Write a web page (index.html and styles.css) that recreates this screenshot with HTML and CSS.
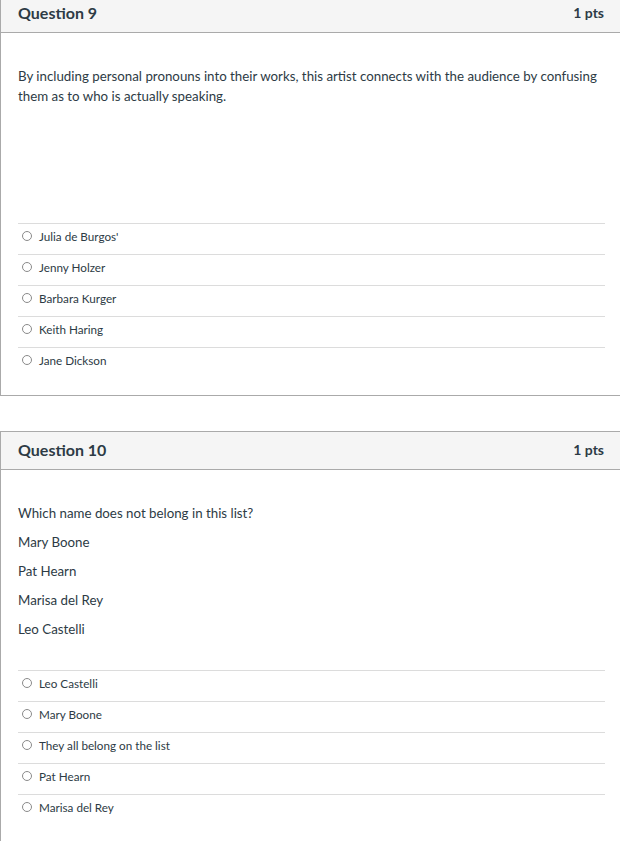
FILE: index.html
```html
<!DOCTYPE html>
<html lang="en">
<head>
<meta charset="utf-8">
<title>Quiz</title>
<link rel="stylesheet" href="styles.css">
</head>
<body>
<div class="page">
  <section class="question first">
    <header class="qhead">
      <h2 class="qtitle">Question 9</h2>
      <span class="qpts">1 pts</span>
    </header>
    <div class="qbody">
      <div class="qtext">
        <p>By including personal pronouns into their works, this artist connects with the audience by confusing them as to who is actually speaking.</p>
      </div>
      <div class="answers">
        <label class="answer"><span class="radio"></span><span class="alabel">Julia de Burgos'</span></label>
        <label class="answer"><span class="radio"></span><span class="alabel">Jenny Holzer</span></label>
        <label class="answer"><span class="radio"></span><span class="alabel">Barbara Kurger</span></label>
        <label class="answer"><span class="radio"></span><span class="alabel">Keith Haring</span></label>
        <label class="answer"><span class="radio"></span><span class="alabel">Jane Dickson</span></label>
      </div>
    </div>
  </section>
  <section class="question">
    <header class="qhead">
      <h2 class="qtitle">Question 10</h2>
      <span class="qpts">1 pts</span>
    </header>
    <div class="qbody">
      <div class="qtext">
        <p>Which name does not belong in this list?</p>
        <p>Mary Boone</p>
        <p>Pat Hearn</p>
        <p>Marisa del Rey</p>
        <p>Leo Castelli</p>
      </div>
      <div class="answers">
        <label class="answer"><span class="radio"></span><span class="alabel">Leo Castelli</span></label>
        <label class="answer"><span class="radio"></span><span class="alabel">Mary Boone</span></label>
        <label class="answer"><span class="radio"></span><span class="alabel">They all belong on the list</span></label>
        <label class="answer"><span class="radio"></span><span class="alabel">Pat Hearn</span></label>
        <label class="answer"><span class="radio"></span><span class="alabel">Marisa del Rey</span></label>
      </div>
    </div>
  </section>
</div>
</body>
</html>
```

FILE: styles.css
```css
html, body {
  margin: 0;
  padding: 0;
  background: #ffffff;
  overflow: hidden;
}

body {
  font-family: Lato, "Open Sans", Arial, sans-serif;
  color: #2d3b45;
}

.page {
  width: 622px;
}

.question {
  border: 1px solid #aaaaaa;
  background: #ffffff;
  margin-bottom: 35px;
}

.question.first {
  margin-top: -6px;
}

.qhead {
  box-sizing: content-box;
  display: flex;
  align-items: center;
  justify-content: space-between;
  height: 35px;
  padding: 0 17px 2px 17px;
  background: #f5f5f5;
  border-bottom: 1px solid #aaaaaa;
}

.qtitle {
  margin: 0;
  font-size: 16px;
  font-weight: 700;
  color: #2d3b45;
}

.qpts {
  font-size: 14px;
  font-weight: 700;
  color: #2d3b45;
}

.qbody {
  padding: 33px 16px 17px 17px;
}

.qtext {
  display: flex;
  flex-direction: column;
  gap: 9px;
  min-height: 126px;
  font-size: 13.3px;
  line-height: 20px;
}

.qtext p {
  margin: 0;
}

.answers {
  margin-top: 31px;
}

.answer {
  display: flex;
  align-items: center;
  height: 30px;
  border-top: 1px solid #dcdcdc;
  font-size: 11.7px;
  color: #2d3b45;
}

.radio {
  box-sizing: border-box;
  width: 10px;
  height: 10px;
  margin-left: 4px;
  margin-right: 7px;
  margin-top: -6px;
  border: 1px solid #8a8a8a;
  border-radius: 50%;
  background: #ffffff;
  flex: none;
}

.alabel {
  margin-top: -6px;
}
```
